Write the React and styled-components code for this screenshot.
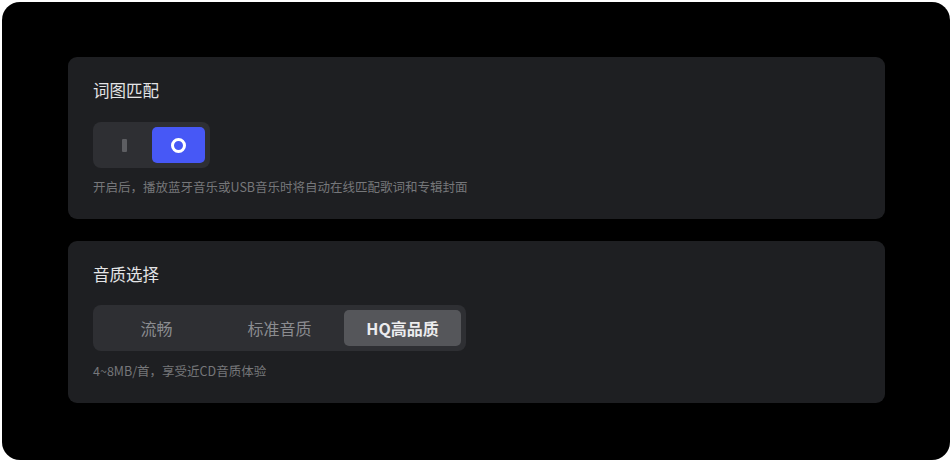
import styled, { createGlobalStyle } from "styled-components";

const Global = createGlobalStyle`
  html, body {
    margin: 0;
    background: #ffffff;
  }
  body {
    font-family: "Noto Sans CJK SC", "Noto Sans", sans-serif;
  }
`;

const Frame = styled.div`
  margin: 2px;
  width: 948px;
  height: 458px;
  box-sizing: border-box;
  background: #000000;
  border-radius: 18px;
  padding: 55px 65px 0 66px;
  display: flex;
  flex-direction: column;
  gap: 22px;
`;

const Card = styled.section`
  height: 162px;
  box-sizing: border-box;
  background: #1e1f22;
  border-radius: 9px;
  padding: 22px 25px 0 25px;
  display: flex;
  flex-direction: column;
  align-items: flex-start;
`;

const Title = styled.h3`
  margin: 0;
  font-size: 16.5px;
  line-height: 22px;
  font-weight: 400;
  color: #e4e4e6;
`;

const Desc = styled.p`
  margin: ${(p) => p.top}px 0 0;
  font-size: 12.5px;
  line-height: 18px;
  color: #76777a;
`;

const Toggle = styled.div`
  margin-top: 21px;
  width: 117px;
  height: 46px;
  box-sizing: border-box;
  padding: 5px;
  border-radius: 8px;
  background: #2e2f33;
  display: flex;
  justify-content: ${(p) => (p.on ? "flex-end" : "flex-start")};
  position: relative;
`;

const OffMark = styled.span`
  position: absolute;
  left: 29px;
  top: 17px;
  width: 5px;
  height: 13px;
  border-radius: 1px;
  background: #5d5e62;
`;

const Knob = styled.div`
  width: 53px;
  height: 36px;
  border-radius: 5px;
  background: ${(p) => (p.on ? "#4758f6" : "#55565a")};
  display: flex;
  align-items: center;
  justify-content: center;
`;

const Ring = styled.span`
  width: 9px;
  height: 9px;
  border-radius: 50%;
  border: 3px solid #ffffff;
`;

const Segmented = styled.div`
  margin-top: 20px;
  width: 373px;
  height: 46px;
  box-sizing: border-box;
  padding: 5px;
  border-radius: 8px;
  background: #2e2f33;
  display: grid;
  grid-template-columns: repeat(3, 1fr);
  gap: 6px;
`;

const Segment = styled.button`
  border: none;
  border-radius: 5px;
  padding: 0;
  font-family: inherit;
  font-size: 16px;
  font-weight: ${(p) => (p.active ? 700 : 400)};
  color: ${(p) => (p.active ? "#ececee" : "#8b8c90")};
  background: ${(p) => (p.active ? "#55565a" : "transparent")};
  cursor: pointer;
`;

const qualities = ["流畅", "标准音质", "HQ高品质"];

export default function App() {
  const current = 2;
  return (
    <>
      <Global />
      <Frame>
        <Card>
          <Title>词图匹配</Title>
          <Toggle on>
            <OffMark />
            <Knob on>
              <Ring />
            </Knob>
          </Toggle>
          <Desc top={10}>开启后，播放蓝牙音乐或USB音乐时将自动在线匹配歌词和专辑封面</Desc>
        </Card>
        <Card>
          <Title>音质选择</Title>
          <Segmented>
            {qualities.map((q, i) => (
              <Segment key={q} active={i === current}>
                {q}
              </Segment>
            ))}
          </Segmented>
          <Desc top={11}>4~8MB/首，享受近CD音质体验</Desc>
        </Card>
      </Frame>
    </>
  );
}
